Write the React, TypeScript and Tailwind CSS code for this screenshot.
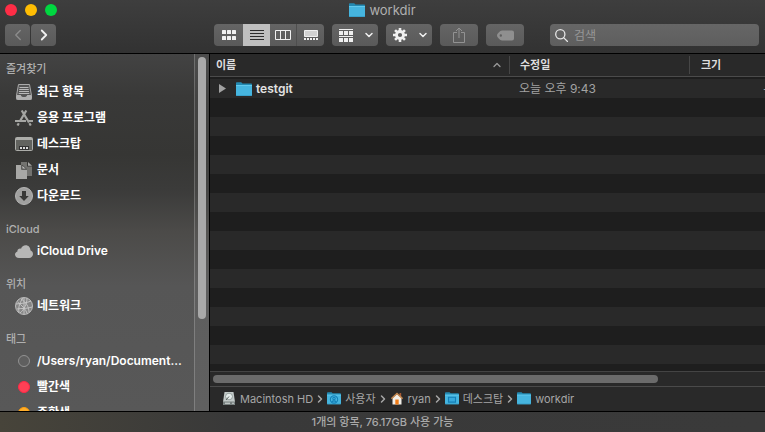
import type { ReactNode } from 'react';
import { clsx } from 'clsx';
import { LuChevronDown, LuChevronLeft, LuChevronRight, LuChevronUp } from 'react-icons/lu';

type SidebarItem = { id: string; text: string; icon: ReactNode };
type SidebarGroup = { id: string; title: string; items: SidebarItem[] };
type PathItem = { id: string; text: string; icon: ReactNode };
type FileEntry = { name: string; modified: string; size: string };

const FONT = "font-['Inter','Noto_Sans_CJK_KR',sans-serif]";
const TOOL = 'flex h-[22px] items-center justify-center rounded bg-linear-to-b from-[#656565] to-[#5a5a5a]';

const SIDEBAR: SidebarGroup[] = [
  {
    id: 'favorites',
    title: '즐겨찾기',
    items: [
      { id: 'recents', text: '최근 항목', icon: <RecentsIcon /> },
      { id: 'apps', text: '응용 프로그램', icon: <AppsIcon /> },
      { id: 'desktop', text: '데스크탑', icon: <DesktopIcon /> },
      { id: 'documents', text: '문서', icon: <DocumentsIcon /> },
      { id: 'downloads', text: '다운로드', icon: <DownloadsIcon /> },
    ],
  },
  { id: 'icloud', title: 'iCloud', items: [{ id: 'drive', text: 'iCloud Drive', icon: <CloudIcon /> }] },
  { id: 'locations', title: '위치', items: [{ id: 'network', text: '네트워크', icon: <NetworkIcon /> }] },
  {
    id: 'tags',
    title: '태그',
    items: [
      {
        id: 'path',
        text: '/Users/ryan/Document...',
        icon: <span className="size-3 rounded-full border border-[#929292] bg-[#5f5f5f]" />,
      },
      {
        id: 'red',
        text: '빨간색',
        icon: <span className="size-3 rounded-full border border-[#ff2846] bg-[#ff4055]" />,
      },
      {
        id: 'orange',
        text: '주황색',
        icon: <span className="size-3 rounded-full border border-[#ff9f0a] bg-[#ffae2b]" />,
      },
    ],
  },
];

const PATH: PathItem[] = [
  { id: 'disk', text: 'Macintosh HD', icon: <DiskIcon /> },
  { id: 'users', text: '사용자', icon: <FolderIcon badge="user" className="w-3.5" /> },
  { id: 'home', text: 'ryan', icon: <HomeIcon /> },
  { id: 'desktop', text: '데스크탑', icon: <FolderIcon badge="desktop" className="w-3.5" /> },
  { id: 'workdir', text: 'workdir', icon: <FolderIcon className="w-3.5" /> },
];

const FILES: FileEntry[] = [{ name: 'testgit', modified: '오늘 오후 9:43', size: '--' }];

// The Hangul face is drawn lighter than Inter at the same weight.
function isHangul(text: string) {
  return /[가-힣]/.test(text);
}

export default function App() {
  return (
    <div className={clsx('flex h-screen flex-col overflow-hidden bg-[#1e1e1e] text-white select-none', FONT)}>
      <WindowHeader />
      <div className="flex min-h-0 flex-1">
        <Sidebar />
        <main className="flex min-w-0 flex-1 flex-col">
          <FileList />
          <div className="h-[15px] shrink-0 border-t border-[#444] bg-[#292929] px-[3px] pt-[3px]">
            <div className="h-2 w-[81%] rounded-full bg-[#6b6b6b]" />
          </div>
          <PathBar />
        </main>
      </div>
      <footer className="flex h-[21px] shrink-0 items-center justify-center border-t border-black bg-linear-to-r from-[#47443a] via-[#393939] via-30% to-[#3a3a3a] pt-px text-[11px] font-medium text-[#a9a9a9]">
        1개의 항목, 76.17GB 사용 가능
      </footer>
    </div>
  );
}

function WindowHeader() {
  return (
    <header className="shrink-0 border-b border-black bg-linear-to-b from-[#3e3e3e] to-[#323232]">
      <div className="grid h-5 grid-cols-[1fr_auto_1fr] items-center px-[5px]">
        <div className="flex gap-2">
          <button type="button" aria-label="닫기" className="size-3 rounded-full bg-[#ff2d46]" />
          <button type="button" aria-label="최소화" className="size-3 rounded-full bg-[#ffbd03]" />
          <button type="button" aria-label="확대" className="size-3 rounded-full bg-[#00d740]" />
        </div>
        <h1 className="flex items-center gap-1 text-[13px] leading-4 text-[#b0b0b0]">
          <FolderIcon className="w-4" />
          workdir
        </h1>
      </div>
      <div className="flex pt-1 pr-1.5 pb-[7px] pl-[5px]">
        <div className="flex w-[209px] shrink-0 gap-px">
          <button type="button" aria-label="뒤로" className={clsx(TOOL, 'w-[25px] text-[#8c8c8c]')}>
            <LuChevronLeft className="size-[18px]" strokeWidth={1.8} />
          </button>
          <button type="button" aria-label="앞으로" className={clsx(TOOL, 'w-[25px] text-[#f0f0f0]')}>
            <LuChevronRight className="size-[18px]" strokeWidth={2.4} />
          </button>
        </div>
        <div className="flex gap-2">
          <div className={clsx(TOOL, 'overflow-hidden text-[#f0f0f0]')}>
            <button type="button" aria-label="아이콘" className="flex h-full w-[29px] items-center justify-center">
              <GridIcon />
            </button>
            <button
              type="button"
              aria-label="목록"
              aria-pressed="true"
              className="flex h-full w-[27px] items-center justify-center bg-[#bfbfbf] text-[#2c2c2c]"
            >
              <svg className="h-2.5 w-3.5" viewBox="0 0 14 10" stroke="currentColor">
                <path d="M0 .5h14M0 3.5h14M0 6.5h14M0 9.5h14" />
              </svg>
            </button>
            <button
              type="button"
              aria-label="계층"
              className="flex h-full w-[27px] items-center justify-center border-r border-[#4e4e4e]"
            >
              <svg className="h-2.5 w-4" viewBox="0 0 16 10" fill="none" stroke="currentColor">
                <path d="M.5.5h15v9H.5zM5.5.5v9M10.5.5v9" />
              </svg>
            </button>
            <button type="button" aria-label="갤러리" className="flex h-full w-[27px] items-center justify-center">
              <svg className="h-2.5 w-3.5" viewBox="0 0 14 10" fill="currentColor">
                <path d="M.5.5h13v6H.5z" fill="#d2d2d2" stroke="currentColor" />
                <path d="M0 8h2v2H0zM3 8h2v2H3zM6 8h2v2H6zM9 8h2v2H9zM12 8h2v2h-2z" />
              </svg>
            </button>
          </div>
          <button type="button" aria-label="그룹" className={clsx(TOOL, 'w-[46px] gap-2.5 pl-1 text-[#f0f0f0]')}>
            <svg className="h-[13px] w-3.5" viewBox="0 0 14 13" fill="currentColor">
              <path d="M0 0h14v1H0zM0 7h14v1H0z" />
              <path d="M0 2h4v4H0zM5 2h4v4H5zM10 2h4v4h-4zM0 9h4v4H0zM5 9h4v4H5zM10 9h4v4h-4z" />
            </svg>
            <LuChevronDown className="size-3" strokeWidth={3} />
          </button>
          <button type="button" aria-label="동작" className={clsx(TOOL, 'w-[46px] gap-2.5 pl-1 text-[#f0f0f0]')}>
            <GearIcon />
            <LuChevronDown className="size-3" strokeWidth={3} />
          </button>
          <button type="button" aria-label="공유" className={clsx(TOOL, 'w-[38px] text-[#929292]')}>
            <svg className="h-4 w-3" viewBox="0 0 12 16" fill="none" stroke="currentColor">
              <path d="M4 5.5H.5v10h11v-10H8M6 11V1M3 4l3-3 3 3" />
            </svg>
          </button>
          <button type="button" aria-label="태그" className={clsx(TOOL, 'w-[38px] text-[#8f8f8f]')}>
            <svg className="h-[11px] w-[17px]" viewBox="0 0 17 11">
              <path
                fill="currentColor"
                fillRule="evenodd"
                d="M5 .5h10a2 2 0 0 1 2 2v6a2 2 0 0 1-2 2H5C3 10.500 0 7 0 5.500S3 .5 5 .5ZM3.800 4.300a1.200 1.200 0 1 0 0 2.400 1.200 1.200 0 0 0 0-2.400Z"
              />
            </svg>
          </button>
        </div>
        <label className="ml-[26px] flex h-[22px] min-w-0 flex-1 items-center gap-1.5 rounded bg-linear-to-b from-[#666] to-[#5e5e5e] pl-[5px]">
          <svg className="size-[13px] shrink-0" viewBox="0 0 13 13" fill="none" stroke="#e6e6e6" strokeWidth="1.3">
            <circle cx="5.300" cy="5.300" r="4.600" />
            <path d="m8.600 8.600 4 4" strokeLinecap="round" />
          </svg>
          <input
            type="search"
            aria-label="검색"
            placeholder="검색"
            className="h-full min-w-0 flex-1 bg-transparent text-[12px] outline-none placeholder:text-[#979797]"
          />
        </label>
      </div>
    </header>
  );
}

function Sidebar() {
  return (
    <aside className="flex w-[210px] shrink-0 border-r border-black bg-[linear-gradient(#434343_0%,#393938_12%,#363634_28%,#3b3b3a_38%,#4c4b49_50%,#565656_65%,#585858_100%)]">
      <nav className="min-w-0 flex-1 overflow-hidden">
        {SIDEBAR.map((group) => (
          <section key={group.id} className="group">
            <h2 className="flex h-[29px] items-end pb-px pl-1.5 text-[11px] leading-4 font-medium text-[#b0b0b0] group-first:h-[25px] group-first:pb-0.5">
              {group.title}
            </h2>
            {group.items.map((item) => (
              <a
                key={item.id}
                href={`#${item.id}`}
                className={clsx(
                  'flex h-[26px] items-center gap-1 pl-[15px] text-[12px] whitespace-nowrap',
                  isHangul(item.text) ? 'font-bold' : 'font-semibold',
                )}
              >
                <span className="flex w-[18px] shrink-0 justify-center">{item.icon}</span>
                {item.text}
              </a>
            ))}
          </section>
        ))}
      </nav>
      <div className="w-[15px] shrink-0 border-l border-white/20 bg-white/5 px-[3px] pt-[3px]">
        <div className="h-[74%] w-2 rounded-full bg-[#a9a9a9]" />
      </div>
    </aside>
  );
}

function FileList() {
  return (
    <div className="min-h-0 flex-1 overflow-hidden bg-[repeating-linear-gradient(#292929_0_6px,#1e1e1e_6px_25px,#292929_25px_38px)]">
      <table className="w-[125%] table-fixed border-separate border-spacing-0 text-left">
        <colgroup>
          <col className="w-[300px]" />
          <col className="w-[180px]" />
          <col className="w-[90px]" />
          <col />
        </colgroup>
        <thead>
          <tr className="h-[23px] text-[11px] leading-4 text-[#dedede] *:border-b *:border-[#4b4b4b] *:bg-[#292929]">
            <th scope="col" className="p-0">
              <div className="flex h-[18px] items-center justify-between border-r border-[#464646] pr-1.5 pl-1.5">
                이름
                <LuChevronUp className="size-3 text-[#999]" strokeWidth={2.5} />
              </div>
            </th>
            <th scope="col" className="p-0">
              <div className="flex h-[18px] items-center border-r border-[#464646] pl-2.5">수정일</div>
            </th>
            <th scope="col" className="py-0 pr-0 pl-[11px]">
              크기
            </th>
            <td />
          </tr>
        </thead>
        <tbody>
          {FILES.map((file) => (
            <tr key={file.name} className="h-[21px] *:px-0 *:pt-0.5 *:pb-0">
              <td>
                <div className="flex items-center pl-[9px] text-[12px] leading-4 font-semibold text-[#e2e2e2]">
                  <button type="button" aria-label="펼치기" className="mr-2.5">
                    <svg className="h-[9px] w-[7px]" viewBox="0 0 7 9" fill="#a2a2a2">
                      <path d="M0 0 7 4.500 0 9z" />
                    </svg>
                  </button>
                  <FolderIcon className="mr-1 w-4" />
                  {file.name}
                </div>
              </td>
              <td className="text-[12px] leading-4 text-[#a3a3a3]">
                <span className="pl-[9px]">{file.modified}</span>
              </td>
              <td className="text-right text-[12px] leading-4 text-[#a3a3a3]">
                <span className="pr-1.5">{file.size}</span>
              </td>
              <td />
            </tr>
          ))}
        </tbody>
      </table>
    </div>
  );
}

function PathBar() {
  return (
    <nav className="flex h-[25px] shrink-0 items-center border-t border-[#4a4a4a] bg-[#292929] pb-px pl-3 text-[#a6a6a6]">
      {PATH.map((item, index) => (
        <a key={item.id} href={`#${item.id}`} className="flex items-center text-[11px] leading-4">
          {index > 0 && <LuChevronRight className="mx-px size-3" strokeWidth={3} />}
          <span className="mr-1 flex w-3.5 justify-center">{item.icon}</span>
          {item.text}
        </a>
      ))}
    </nav>
  );
}

function FolderIcon({ badge, className }: { badge?: 'user' | 'desktop'; className?: string }) {
  return (
    <svg className={clsx('shrink-0', className)} viewBox="0 0 16 14">
      <path d="M0 1.200C0 .5.3.2 1 .2h4.200l1.300 1.300H15c.6 0 1 .3 1 1V6H0z" fill="#2389b1" />
      <path d="M0 3h16v10.200c0 .5-.3.8-.8.8H.8c-.5 0-.8-.3-.8-.8z" fill="#46b5df" />
      <path d="M0 3h16v1H0z" fill="#62c9ec" />
      <path d="M.2 13.200h15.600v.8H.2z" fill="#369ec7" />
      {badge === 'user' && (
        <g fill="none" stroke="#137fb6" strokeWidth="1.200">
          <circle cx="8" cy="8.500" r="4.200" />
          <circle cx="8" cy="7.500" r="1.400" />
          <path d="M5.500 11.500c1-1.800 4-1.800 5 0" />
        </g>
      )}
      {badge === 'desktop' && <path d="M4 6h8v5.500H4z" fill="#38a9dc" stroke="#137fb6" strokeWidth="1.300" />}
    </svg>
  );
}

function GridIcon() {
  return (
    <svg className="h-2.5 w-3.5" viewBox="0 0 14 10" fill="currentColor">
      {[0, 5, 10].map((x) => (
        <g key={x}>
          <rect x={x} y="0" width="4" height="4" rx=".6" />
          <rect x={x} y="6" width="4" height="4" rx=".6" />
        </g>
      ))}
    </svg>
  );
}

function GearIcon() {
  return (
    <svg className="size-3.5" viewBox="-7 -7 14 14" fill="none" stroke="currentColor">
      <circle r="3.500" strokeWidth="2.800" />
      {[0, 45, 90, 135].map((angle) => (
        <path key={angle} d="M0-7v3M0 4v3" strokeWidth="2.600" transform={`rotate(${angle})`} />
      ))}
    </svg>
  );
}

function RecentsIcon() {
  return (
    <svg className="h-4 w-4" viewBox="0 0 16 16">
      <path d="M2.500.5h11l2 11v3.200c0 .5-.3.8-.8.8H1.300c-.5 0-.8-.3-.8-.8v-3.200z" fill="#555" stroke="#aaa" />
      <path d="M3.500 3.500h9M3.200 5.500h9.600M3 7.500h10M2.700 9.500h10.600" stroke="#b8b8b8" />
      <path d="M.5 11h4.300c.4 1.500 1.200 2 3.200 2s2.800-.5 3.200-2h4.300v4.500H.5z" fill="#b0b0b0" />
    </svg>
  );
}

function AppsIcon() {
  return (
    <svg className="h-4 w-[18px]" viewBox="0 0 18 16" fill="none" stroke="#a5a6a3" strokeWidth="2.200">
      <path d="M0 11h11M14 11h4M6.700.5l7.300 12M14.400 13.200l1.400 2.300M11.300.5 5.200 10.800M3.800 13.200 2.500 15.500" />
    </svg>
  );
}

function DesktopIcon() {
  return (
    <svg className="h-3.5 w-[18px]" viewBox="0 0 18 14">
      <rect x=".5" y=".5" width="17" height="13" rx="1" fill="#62635f" stroke="#acada9" />
      <path d="M1 1h16v2H1z" fill="#acada9" />
      <path d="M4 9h10v4H4z" fill="#333" />
      <path d="M5 10h2v2H5zM8 10h2v2H8zM11 10h2v2h-2z" fill="#d8d8d8" />
    </svg>
  );
}

function DocumentsIcon() {
  return (
    <svg className="h-[17px] w-4" viewBox="0 0 16 17">
      <path d="M5 0h6v4.500h5V14H5z" fill="#737370" />
      <path d="M12 0v3.700h4z" fill="#a8a8a6" />
      <path d="M0 3h5v5h6v9H0z" fill="#a8a8a6" />
      <path d="M6 3v4h4.500z" fill="#bcbcba" stroke="#3b3b39" strokeWidth=".7" />
    </svg>
  );
}

function DownloadsIcon() {
  return (
    <svg className="size-[18px]" viewBox="0 0 18 18">
      <circle cx="9" cy="9" r="8.500" fill="#a0a09f" stroke="#b5b5b4" />
      <path d="M7 4h4v5h2.800L9 14 4.200 9H7z" fill="#393937" />
    </svg>
  );
}

function CloudIcon() {
  return (
    <svg className="h-[13px] w-[18px]" viewBox="0 0 18 13">
      <path
        d="M4 13C1.600 13 0 11.500 0 9.600 0 8 1 6.800 2.400 6.400 2.200 4.300 4.300 3 6 3.700 6.700 1.500 8.500.2 10.700.2c2.900 0 4.800 2.300 4.700 5C17 5.900 18 7.300 18 9c0 2.300-1.700 4-4 4z"
        fill="#b7b7b6"
      />
    </svg>
  );
}

function NetworkIcon() {
  return (
    <svg className="size-[18px]" viewBox="0 0 18 18" fill="none">
      <circle cx="9" cy="9" r="8.500" fill="#858585" stroke="#bcbcbc" />
      <path
        d="M1 7c5-.5 11-1 15-3M2 12c5-1 10 0 15-2M4 15.500C3 10 5 5 8 1M6 2c5 3 8 8 8 13M12 1C12 7 9 13 5 16M2.500 5c4 3 8 7 10 12M9 1v16"
        stroke="#c9c9c9"
        strokeWidth=".9"
      />
    </svg>
  );
}

function DiskIcon() {
  return (
    <svg className="h-[13px] w-3" viewBox="0 0 12 13">
      <path d="M1.500 0h9L12 10v2c0 .6-.4 1-1 1H1c-.6 0-1-.4-1-1v-2z" fill="#c3cac9" />
      <path d="M0 9.500h12V12c0 .6-.4 1-1 1H1c-.6 0-1-.4-1-1z" fill="#78807f" />
      <ellipse cx="6" cy="4.500" rx="3.500" ry="3.300" fill="#e5eceb" stroke="#85908e" strokeWidth=".8" />
      <path d="M6 4.500 3 8" stroke="#59615f" />
      <path d="M2 11.200h5" stroke="#dce2e1" />
      <circle cx="10" cy="11.200" r=".7" fill="#e7eded" />
    </svg>
  );
}

function HomeIcon() {
  return (
    <svg className="h-[13px] w-3" viewBox="0 0 12 13">
      <path d="M8.500 1h1.700v4H8.500z" fill="#a85a34" />
      <path d="M1.500 6 6 2l4.500 4v6.500h-9z" fill="#f1eee8" />
      <path d="M.4 6.700 6 1.500l5.600 5.200" fill="none" stroke="#c4874f" strokeWidth="1.400" />
      <path d="M4.300 7.500h3.400v5H4.300z" fill="#f07b16" />
    </svg>
  );
}
